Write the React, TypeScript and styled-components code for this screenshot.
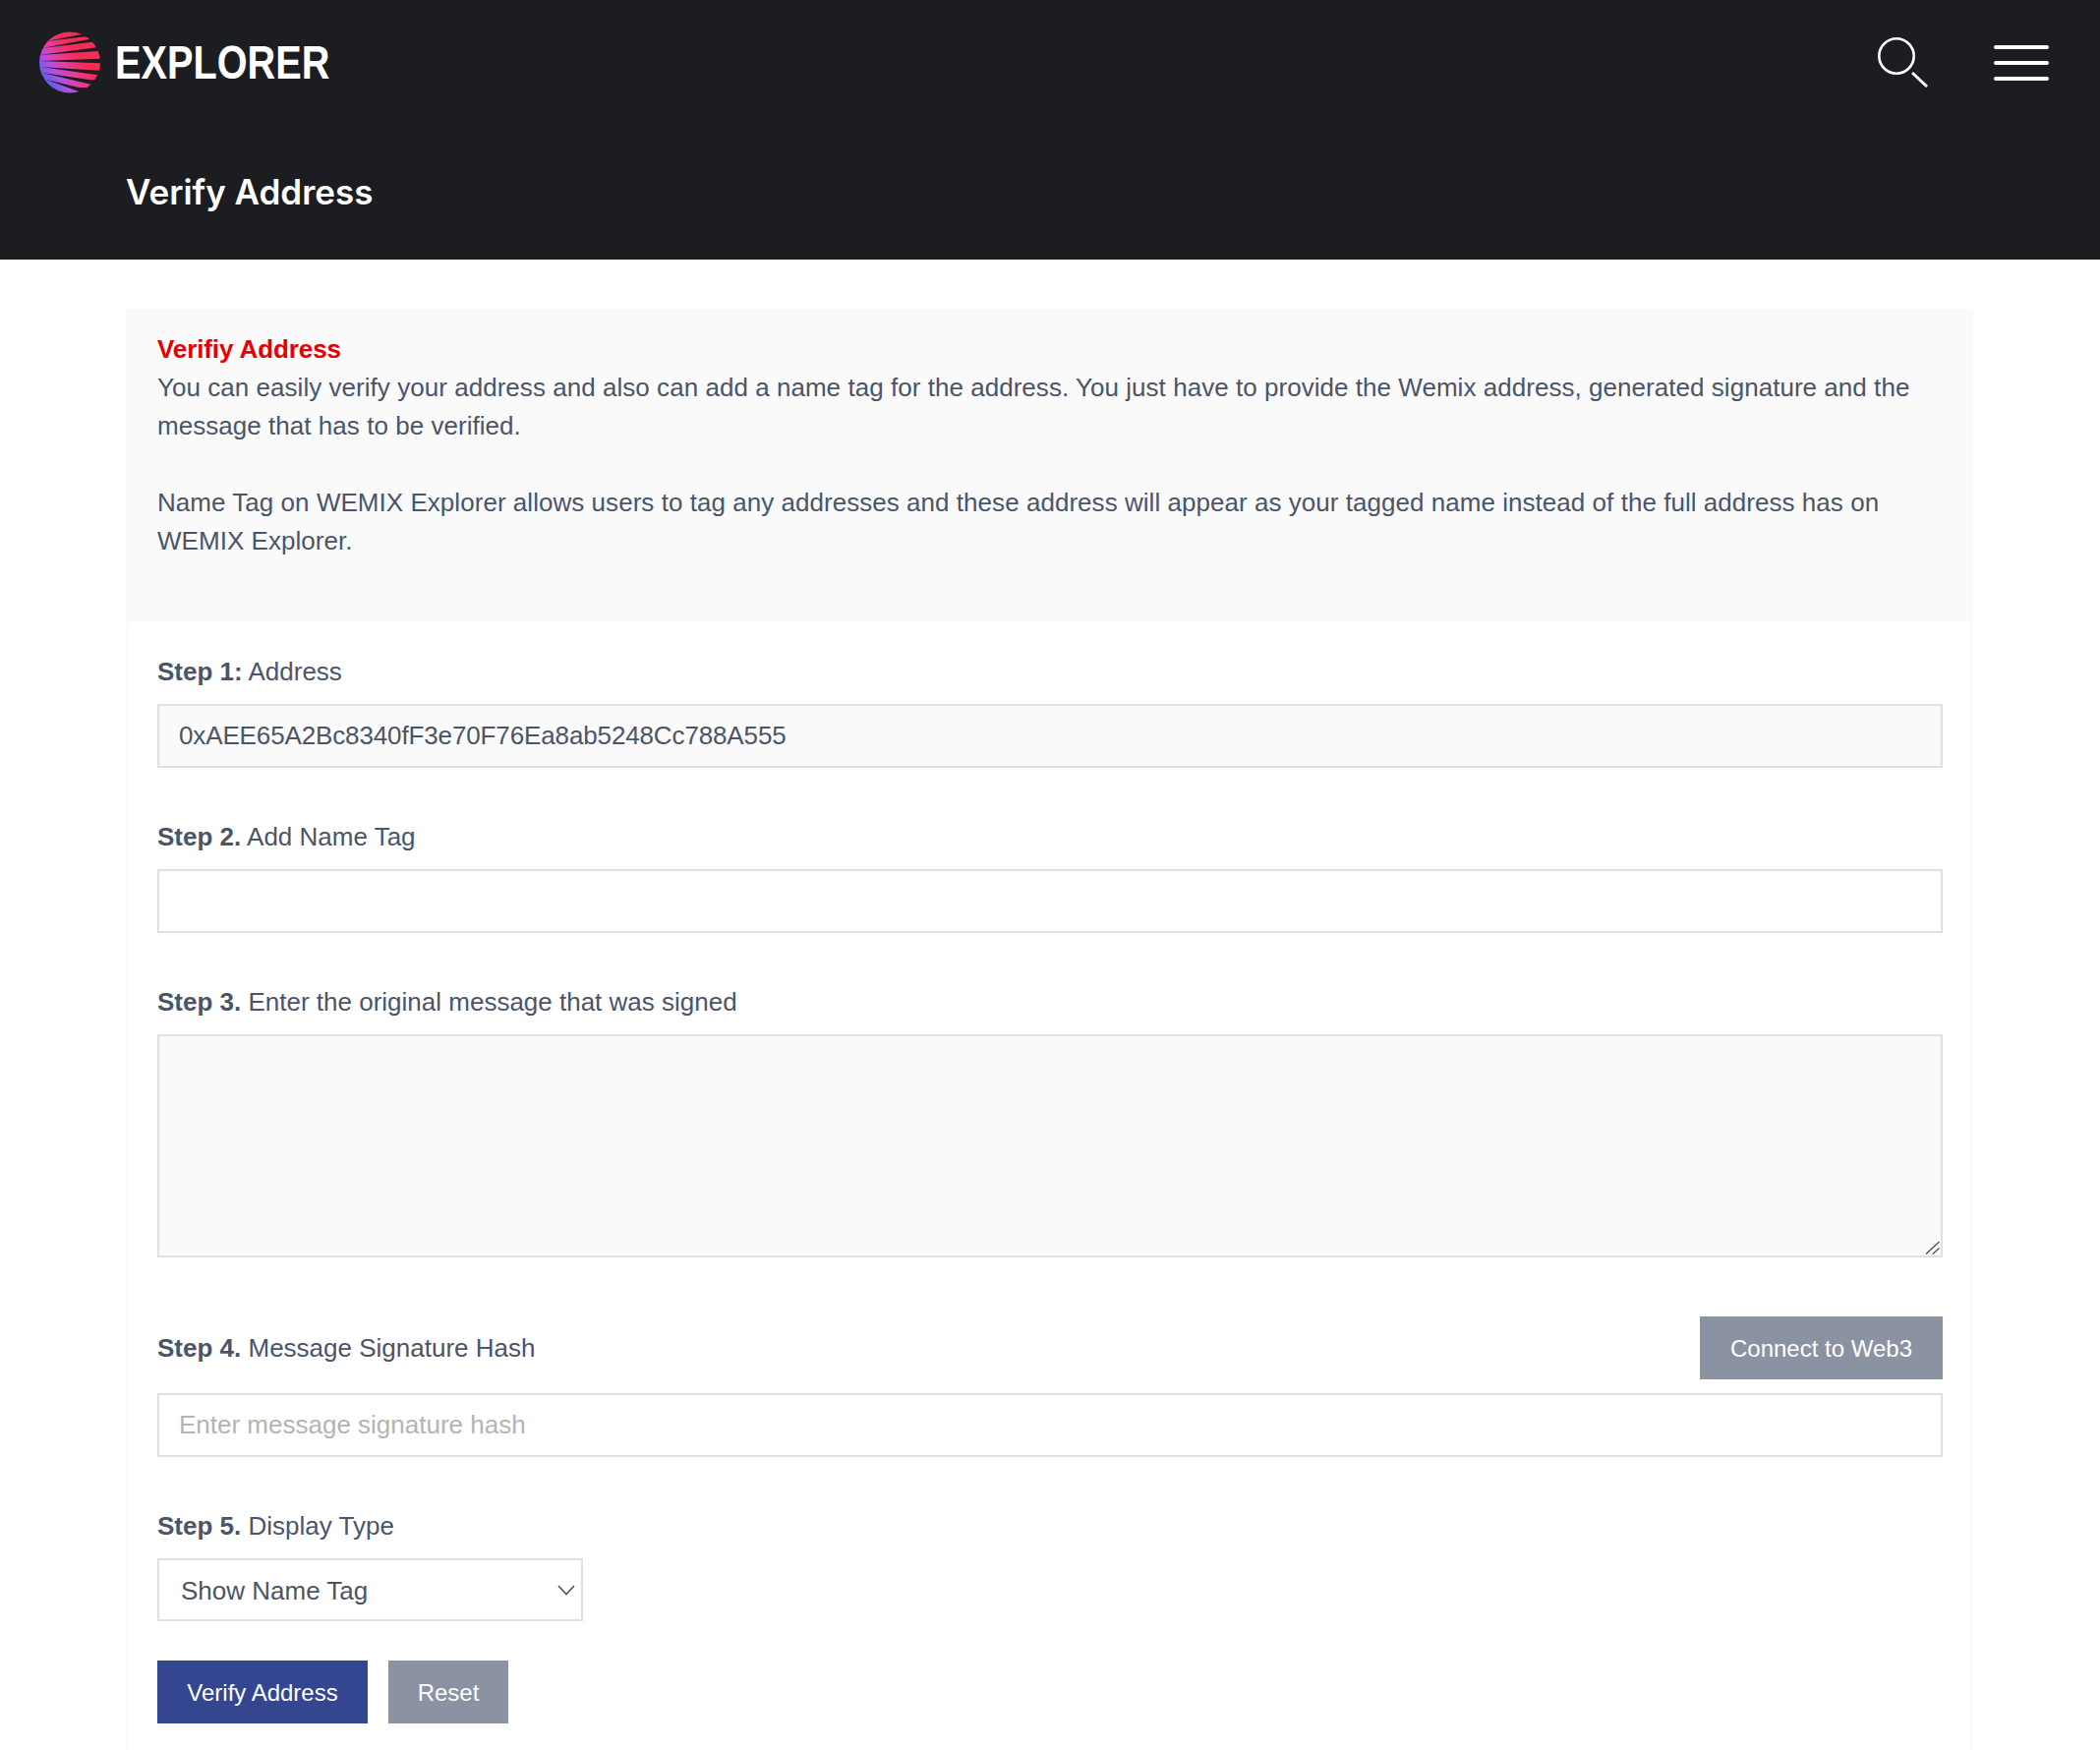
import * as React from "react"
import styled, { createGlobalStyle } from "styled-components"

const GlobalStyle = createGlobalStyle`
  html, body {
    margin: 0;
    padding: 0;
    background: #fff;
  }
  body {
    font-family: "Liberation Sans", Arial, sans-serif;
    color: #4a5568;
  }
  * {
    box-sizing: border-box;
  }
`

const Page = styled.div`
  width: 2136px;
  height: 1780px;
  overflow: hidden;
`

const Header = styled.header`
  height: 264px;
  background: #1b1d21;
  padding: 32px 52px 0 40px;
`

const TopBar = styled.div`
  display: flex;
  align-items: center;
  justify-content: space-between;
  height: 63px;
`

const Brand = styled.div`
  display: flex;
  align-items: center;
  gap: 15px;
`

const BrandName = styled.span`
  display: inline-block;
  width: 218px;
  font-weight: 700;
  font-size: 49px;
  line-height: 63px;
  color: #fff;
  transform: scaleX(0.81);
  transform-origin: left center;
`

const TopActions = styled.div`
  display: flex;
  align-items: center;
  gap: 67px;
`

const PageTitle = styled.h1`
  margin: 75px 0 0 88px;
  font-family: Inter, sans-serif;
  font-weight: 600;
  font-size: 35px;
  line-height: 50px;
  color: #fff;
`

const Content = styled.main`
  margin: 50px 129px 0 128px;
`

const Intro = styled.section`
  height: 319px;
  background: #fafafa;
  padding: 22px 32px 0;
  font-size: 26px;
  line-height: 39px;
  letter-spacing: 0.04px;
`

const IntroTitle = styled.div`
  color: #e60000;
  font-weight: 700;
  letter-spacing: -0.1px;
`

const Card = styled.form`
  border: 3px solid #fafafa;
  border-top: none;
  padding: 31px 28px 80px 29px;
`

const Field = styled.div<{ $gap?: number }>`
  margin-bottom: ${(p) => p.$gap ?? 51}px;
`

const Label = styled.label`
  display: block;
  font-size: 26px;
  line-height: 39px;
  margin-bottom: 13px;
  b {
    font-weight: 700;
  }
`

const LabelRow = styled.div`
  display: flex;
  align-items: center;
  justify-content: space-between;
  margin-bottom: 14px;
  ${Label} {
    margin-bottom: 0;
  }
`

const TextInput = styled.input`
  display: block;
  width: 100%;
  height: 65px;
  padding: 0 20px;
  border: 2px solid #e0e0e0;
  border-radius: 0;
  outline: none;
  font-family: inherit;
  font-size: 26px;
  color: #4a5568;
  letter-spacing: ${(p) => (p.readOnly ? "-0.13px" : "0")};
  background: ${(p) => (p.readOnly ? "#fafafa" : "#fff")};
  &::placeholder {
    color: #b4b4b4;
    opacity: 1;
  }
`

const AreaWrap = styled.div`
  position: relative;
  svg {
    position: absolute;
    right: 3px;
    bottom: 3px;
  }
`

const TextArea = styled.textarea`
  display: block;
  width: 100%;
  height: 227px;
  border: 2px solid #e0e0e0;
  border-radius: 0;
  outline: none;
  background: #fafafa;
  resize: none;
`

const SelectBox = styled.div`
  position: relative;
  width: 433px;
  height: 64px;
  border: 2px solid #e0e0e0;
  display: flex;
  align-items: center;
  padding: 2px 0 0 22px;
  font-size: 26px;
  svg {
    position: absolute;
    right: 6px;
    top: 25px;
  }
`

const Actions = styled.div`
  display: flex;
  gap: 21px;
`

const Button = styled.button<{ $primary?: boolean; $width: number }>`
  width: ${(p) => p.$width}px;
  height: 64px;
  padding: 1px 0 0;
  border: none;
  border-radius: 0;
  font-family: inherit;
  font-size: 24px;
  color: #fff;
  background: ${(p) => (p.$primary ? "#344690" : "#8b92a2")};
`

// dark wedges between the globe's stripes: thin tip on the left, wide on the right
const wedges = [
  [47, 42, 85, 36, 3],
  [43, 49, 94, 41, 3.5],
  [40, 56, 100, 50, 4],
  [39.5, 62, 103, 62, 4.5],
  [41, 68, 100, 74, 4.5],
  [43, 74, 92, 83.5, 4.5],
  [47, 81, 80, 91, 4],
]

function Logo() {
  return (
    <svg width="62" height="63" viewBox="40 32 62 63">
      <defs>
        <linearGradient id="globe" x1="0.1" y1="0.85" x2="0.75" y2="0.35">
          <stop offset="0" stopColor="#4f62e8" />
          <stop offset="0.3" stopColor="#b44fe6" />
          <stop offset="0.5" stopColor="#e33fa6" />
          <stop offset="0.85" stopColor="#f52c56" />
        </linearGradient>
      </defs>
      <circle cx="71" cy="63.5" r="31" fill="url(#globe)" />
      {wedges.map(([x1, y1, x2, y2, w]) => (
        <polygon
          key={y1}
          points={`${x1},${y1} ${x2},${y2 - w / 2} ${x2 + 8},${y2 - w / 2} ${x2 + 8},${y2 + w / 2} ${x2},${y2 + w / 2}`}
          fill="#1b1d21"
        />
      ))}
    </svg>
  )
}

function SearchIcon() {
  return (
    <svg width="51" height="51" viewBox="0 0 51 51" fill="none" stroke="#fff">
      <circle cx="19" cy="19" r="17.7" strokeWidth="2.6" />
      <path d="M35 36 L50 50" strokeWidth="3" />
    </svg>
  )
}

function MenuIcon() {
  return (
    <svg width="56" height="36" viewBox="0 0 56 36" stroke="#fff" strokeWidth="4" strokeLinecap="round">
      <path d="M2 2 H54 M2 18 H54 M2 34 H54" />
    </svg>
  )
}

export default function App() {
  return (
    <Page>
      <GlobalStyle />
      <Header>
        <TopBar>
          <Brand>
            <Logo />
            <BrandName>EXPLORER</BrandName>
          </Brand>
          <TopActions>
            <SearchIcon />
            <MenuIcon />
          </TopActions>
        </TopBar>
        <PageTitle>Verify Address</PageTitle>
      </Header>
      <Content>
        <Intro>
          <IntroTitle>Verifiy Address</IntroTitle>
          You can easily verify your address and also can add a name tag for the address. You just have to provide the Wemix address, generated signature and the message that has to be verified.
          <br />
          <br />
          Name Tag on WEMIX Explorer allows users to tag any addresses and these address will appear as your tagged name instead of the full address has on WEMIX Explorer.
        </Intro>
        <Card>
          <Field>
            <Label>
              <b>Step 1:</b> Address
            </Label>
            <TextInput readOnly value="0xAEE65A2Bc8340fF3e70F76Ea8ab5248Cc788A555" />
          </Field>
          <Field>
            <Label>
              <b>Step 2.</b> Add Name Tag
            </Label>
            <TextInput />
          </Field>
          <Field $gap={60}>
            <Label>
              <b>Step 3.</b> Enter the original message that was signed
            </Label>
            <AreaWrap>
              <TextArea />
              <svg width="15" height="14" viewBox="0 0 15 14" fill="none" stroke="#555" strokeWidth="1.4">
                <path d="M1 13.5 L14.5 1 M8 13.5 L14.5 7.5" />
              </svg>
            </AreaWrap>
          </Field>
          <Field>
            <LabelRow>
              <Label>
                <b>Step 4.</b> Message Signature Hash
              </Label>
              <Button type="button" $width={247}>
                Connect to Web3
              </Button>
            </LabelRow>
            <TextInput placeholder="Enter message signature hash" />
          </Field>
          <Field $gap={40}>
            <Label>
              <b>Step 5.</b> Display Type
            </Label>
            <SelectBox>
              Show Name Tag
              <svg width="18" height="11" viewBox="0 0 18 11" fill="none" stroke="#4a5568" strokeWidth="1.6">
                <path d="M1 1 L9 9.5 L17 1" />
              </svg>
            </SelectBox>
          </Field>
          <Actions>
            <Button type="button" $primary $width={214}>
              Verify Address
            </Button>
            <Button type="button" $width={122}>
              Reset
            </Button>
          </Actions>
        </Card>
      </Content>
    </Page>
  )
}
